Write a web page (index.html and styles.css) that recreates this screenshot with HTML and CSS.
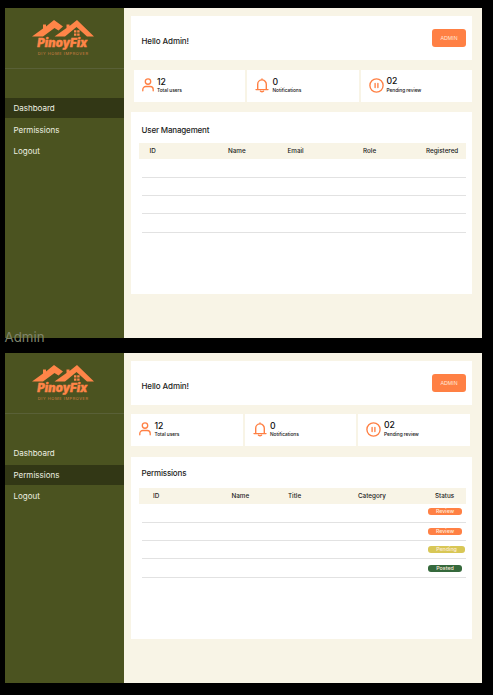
FILE: index.html
```
<!DOCTYPE html>
<html lang="en">
<head>
<meta charset="utf-8">
<title>PinoyFix Admin</title>
<link rel="stylesheet" href="styles.css">
</head>
<body>
<svg class="symbols" aria-hidden="true">
  <symbol id="roof" viewBox="0 0 62 17">
    <path fill="currentColor" d="M0 16.5 11 8.5V4.5h3v2L22 0l9 6.5-4.5 4-4-2.5L11 16.5ZM22.5 16.5 34.5 8V4.5h3V6L45 0l17 16.5h-7L44.5 7 33 16.5Z"/>
    <path fill="currentColor" d="M42 10.2h2.4v2.4H42zm3.2 0h2.4v2.4h-2.4zM42 13.4h2.4v2.4H42zm3.2 0h2.4v2.4h-2.4z"/>
  </symbol>
  <symbol id="user" viewBox="0 0 12 14"><g fill="none" stroke="currentColor" stroke-width="1.35" stroke-linecap="round"><circle cx="6" cy="3.5" r="2.7"/><path d="M.8 12.7v-1.2a3 3 0 0 1 3-3h4.4a3 3 0 0 1 3 3v1.2"/></g></symbol>
  <symbol id="bell" viewBox="0 0 14 15"><g fill="none" stroke="currentColor" stroke-width="1.4" stroke-linecap="round" stroke-linejoin="round"><path d="M1 11.6h12M2.7 11.4V6.2a4.3 4.3 0 0 1 8.6 0v5.2M7 1.7V1M5.5 13.2q1.5 1.1 3 0"/></g></symbol>
  <symbol id="pause" viewBox="0 0 15 15"><g fill="none" stroke="currentColor" stroke-width="1.35" stroke-linecap="round"><circle cx="7.5" cy="7.5" r="6.6"/><path d="M6.1 5.4v4.2M8.9 5.4v4.2"/></g></symbol>
</svg>

<section class="screen">
  <aside class="sidebar">
    <div class="brand">
      <svg class="roof"><use href="#roof"/></svg>
      <div class="name">PinoyFix</div>
      <div class="tagline">DIY HOME IMPROVER</div>
    </div>
    <nav class="nav"><a class="active">Dashboard</a><a>Permissions</a><a>Logout</a></nav>
  </aside>
  <main class="main">
    <header class="hello"><h1>Hello Admin!</h1><button class="admin">ADMIN</button></header>
    <div class="stats">
      <div class="stat"><svg class="user"><use href="#user"/></svg><div><b>12</b><small>Total users</small></div></div>
      <div class="stat"><svg class="bell"><use href="#bell"/></svg><div><b>0</b><small>Notifications</small></div></div>
      <div class="stat"><svg class="pause"><use href="#pause"/></svg><div class="raised"><b>02</b><small>Pending review</small></div></div>
    </div>
    <section class="panel">
      <h2>User Management</h2>
      <div class="head users"><span>ID</span><span>Name</span><span>Email</span><span>Role</span><span>Registered</span></div>
      <div class="rows"><div></div><div></div><div></div><div></div></div>
    </section>
  </main>
  <div class="caption">Admin</div>
</section>

<section class="screen second">
  <aside class="sidebar">
    <div class="brand">
      <svg class="roof"><use href="#roof"/></svg>
      <div class="name">PinoyFix</div>
      <div class="tagline">DIY HOME IMPROVER</div>
    </div>
    <nav class="nav"><a>Dashboard</a><a class="active">Permissions</a><a>Logout</a></nav>
  </aside>
  <main class="main">
    <header class="hello"><h1>Hello Admin!</h1><button class="admin">ADMIN</button></header>
    <div class="stats">
      <div class="stat"><svg class="user"><use href="#user"/></svg><div><b>12</b><small>Total users</small></div></div>
      <div class="stat"><svg class="bell"><use href="#bell"/></svg><div><b>0</b><small>Notifications</small></div></div>
      <div class="stat"><svg class="pause"><use href="#pause"/></svg><div class="raised"><b>02</b><small>Pending review</small></div></div>
    </div>
    <section class="panel">
      <h2>Permissions</h2>
      <div class="head perms"><span>ID</span><span>Name</span><span>Title</span><span>Category</span><span>Status</span></div>
      <div class="rows"><div><i class="pill">Review</i></div><div><i class="pill">Review</i></div><div><i class="pill pending">Pending</i></div><div><i class="pill posted">Posted</i></div></div>
    </section>
  </main>
</section>
</body>
</html>
```
FILE: styles.css
```
* { box-sizing: border-box; }
body { margin: 0; padding: 8px 0 0 5px; height: 695px; overflow: hidden; background: #000; color: #1c1c1c; font-family: Inter, "Open Sans", sans-serif; }
.symbols { position: absolute; width: 0; height: 0; }
.screen { position: relative; display: flex; width: 477px; height: 330px; background: #f8f4e6; }
.second { margin-top: 15px; }
.sidebar { width: 118.5px; background: #4b5320; }
.brand { height: 61px; padding: 12px 2px 0 0; border-bottom: 1px solid #596037; color: #ff8548; display: flex; flex-direction: column; align-items: center; }
.roof { width: 62px; height: 17px; flex: none; }
.name { margin-right: 2px; font: italic 900 11.3px/13px Inter, sans-serif; letter-spacing: .15px; -webkit-text-stroke: .4px currentColor; white-space: nowrap; }
.tagline { margin-top: 1px; font: 4px/5px Inter, sans-serif; letter-spacing: .55px; color: #d08045; white-space: nowrap; }
.nav { padding-top: 29px; display: flex; flex-direction: column; gap: 2px; }
.nav a { height: 20px; padding-left: 8.5px; font-size: 8px; line-height: 21px; color: #eef0e2; }
.nav .active { background: #323715; }
.nav a:last-child { margin-top: -1px; }
.main { flex: 1; padding: 8px 10px 0 7.5px; display: flex; flex-direction: column; }
.hello { height: 44px; padding: 0 6px 0 10.5px; background: #fff; display: flex; align-items: center; justify-content: space-between; }
h1, h2 { margin: 0; white-space: nowrap; }
h1 { font-size: 8px; font-weight: 500; letter-spacing: -.1px; padding-top: 5px; line-height: 10px; }
.admin { width: 34px; height: 18px; padding: 0; border: 0; border-radius: 3px; background: #ff8044; color: #ffe9dc; font: 5.3px "Liberation Sans", sans-serif; }
.stats { display: grid; grid-template-columns: repeat(3, 1fr); gap: 2px; margin: 10px 0 0 2.5px; height: 32px; }
.stat { display: flex; align-items: flex-start; background: #fff; padding: 7.5px 0 0 8px; color: #ff8044; white-space: nowrap; }
.stat svg { flex: none; margin-right: 3.5px; }
.user { width: 12px; height: 14px; }
.bell { width: 14px; height: 15px; }
.pause { width: 15px; height: 15px; }
.stat div { color: #111; }
.stat b, .stat small { display: block; }
.stat b { font: 500 8.7px/9px Inter, sans-serif; letter-spacing: -.2px; }
.stat small { font: 500 4.8px/6px Inter, sans-serif; letter-spacing: -.03px; margin-top: .5px; }
.stat .raised { margin: -.5px 0 0 -.5px; }
.panel { margin-top: 10px; height: 182px; padding: 0 6.5px 0 8px; background: #fff; }
h2 { padding: 13px 0 0 2.5px; height: 30.5px; font-size: 8px; line-height: 11px; font-weight: 500; letter-spacing: -.17px; }
.head { height: 16px; background: #f8f4e6; display: grid; align-items: center; font-size: 6.3px; font-weight: 500; }
.users { grid-template-columns: 78.5px 59.5px 75.5px 63px 1fr; padding-left: 10.5px; }
.perms { grid-template-columns: 78.5px 56.5px 70px 77px 1fr; padding-left: 14px; }
.rows { margin-left: 2.5px; display: grid; grid-template-rows: 19.5px 17.5px 18.5px 19px; }
.rows div { border-bottom: 1px solid #e2e2e2; padding-left: 286.5px; display: flex; align-items: center; }
.pill { width: 34px; height: 7px; border-radius: 3px; background: #ff8044; color: #ffeddc; text-align: center; font: 500 5.3px/7px Inter, sans-serif; }
.rows div:first-child .pill { margin-top: -3px; }
.rows div:nth-child(2) .pill { margin-top: 1px; }
.pending { width: 37px; background: #d8c756; }
.posted { background: #35693c; }
.caption { position: absolute; left: -.5px; top: 321px; font: 13.3px/16px Inter, sans-serif; color: #7f846b; }
.second .stats { margin: 9px 2.5px 0 0; }
.second .panel { margin-top: 11px; }
.second h2 { padding-top: 11px; }
```
